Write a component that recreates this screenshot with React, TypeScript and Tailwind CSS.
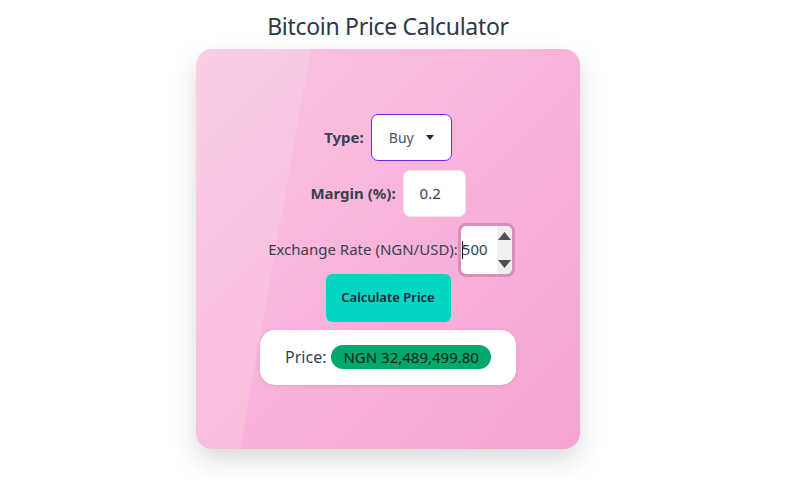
import React from "react";

export default function App() {
  return (
    <div className="w-[776px] min-h-[480px] bg-white flex flex-col items-center" style={{ fontFamily: '"Noto Sans", "Open Sans", sans-serif' }}>
      <h1 className="mt-[10px] text-[23px] leading-[32px] text-[#2d3748] font-normal tracking-[-0.3px]">Bitcoin Price Calculator</h1>
      <div className="relative mt-[7px] w-[384px] h-[400px] rounded-[16px] overflow-hidden bg-gradient-to-br from-[#f9c6e3] via-[#f8b3da] to-[#f6a5d2] shadow-[0_12px_24px_rgba(0,0,0,0.14)] flex flex-col items-center justify-center">
        <div className="absolute inset-0 bg-white/15 [clip-path:polygon(0_0,115px_0,44px_100%,0_100%)]" />
        <div className="relative flex flex-col items-center text-[15px] text-[#374151]">
          <div className="flex items-center gap-[7px]">
            <span className="font-bold">Type:</span>
            <div className="w-[81px] h-[47px] bg-white border border-[#6d28f0] rounded-[7px] flex items-center justify-between pl-[17px] pr-[17px] text-[14px] text-[#4b5563]">
              <span>Buy</span>
              <svg width="8" height="5" viewBox="0 0 8 5"><path d="M0 0h8L4 5z" fill="#1f2937" /></svg>
            </div>
          </div>
          <div className="flex items-center gap-[7px] mt-[9px]">
            <span className="font-bold">Margin (%):</span>
            <div className="w-[63px] h-[47px] bg-white border border-[#e5e7eb] rounded-[7px] flex items-center pl-[16px]">0.2</div>
          </div>
          <div className="flex items-center gap-[3px] mt-[9px] translate-x-[2px]">
            <span>Exchange Rate (NGN/USD):</span>
            <div className="w-[51px] h-[48px] bg-white rounded-[5px] outline outline-[3px] outline-[#d88fbb] flex items-stretch overflow-hidden">
              <div className="flex-1 flex items-center pl-[1px]">
                <span className="w-px h-[18px] bg-[#111]" />
                <span className="-ml-px">500</span>
              </div>
              <div className="w-[15px] bg-[#efefef] flex flex-col items-center justify-between py-[6px]">
                <svg width="13" height="8" viewBox="0 0 13 8"><path d="M0 8L6.5 0L13 8z" fill="#505050" /></svg>
                <svg width="13" height="8" viewBox="0 0 13 8"><path d="M0 0L6.5 8L13 0z" fill="#505050" /></svg>
              </div>
            </div>
          </div>
          <button className="mt-0 w-[125px] h-[48px] bg-[#00d6c2] rounded-[6px] text-[13px] font-semibold text-[#1f2937]">Calculate Price</button>
          <div className="mt-[8px] w-[256px] h-[55px] bg-white rounded-[15px] shadow-[0_1px_4px_rgba(0,0,0,0.1)] flex items-center justify-center gap-[5px]">
            <span className="text-[16px] text-[#374151]">Price:</span>
            <span className="h-[24px] px-[12px] rounded-full bg-[#00a86b] text-[15px] leading-[24px] text-[#0b2318]">NGN 32,489,499.80</span>
          </div>
        </div>
      </div>
    </div>
  );
}
